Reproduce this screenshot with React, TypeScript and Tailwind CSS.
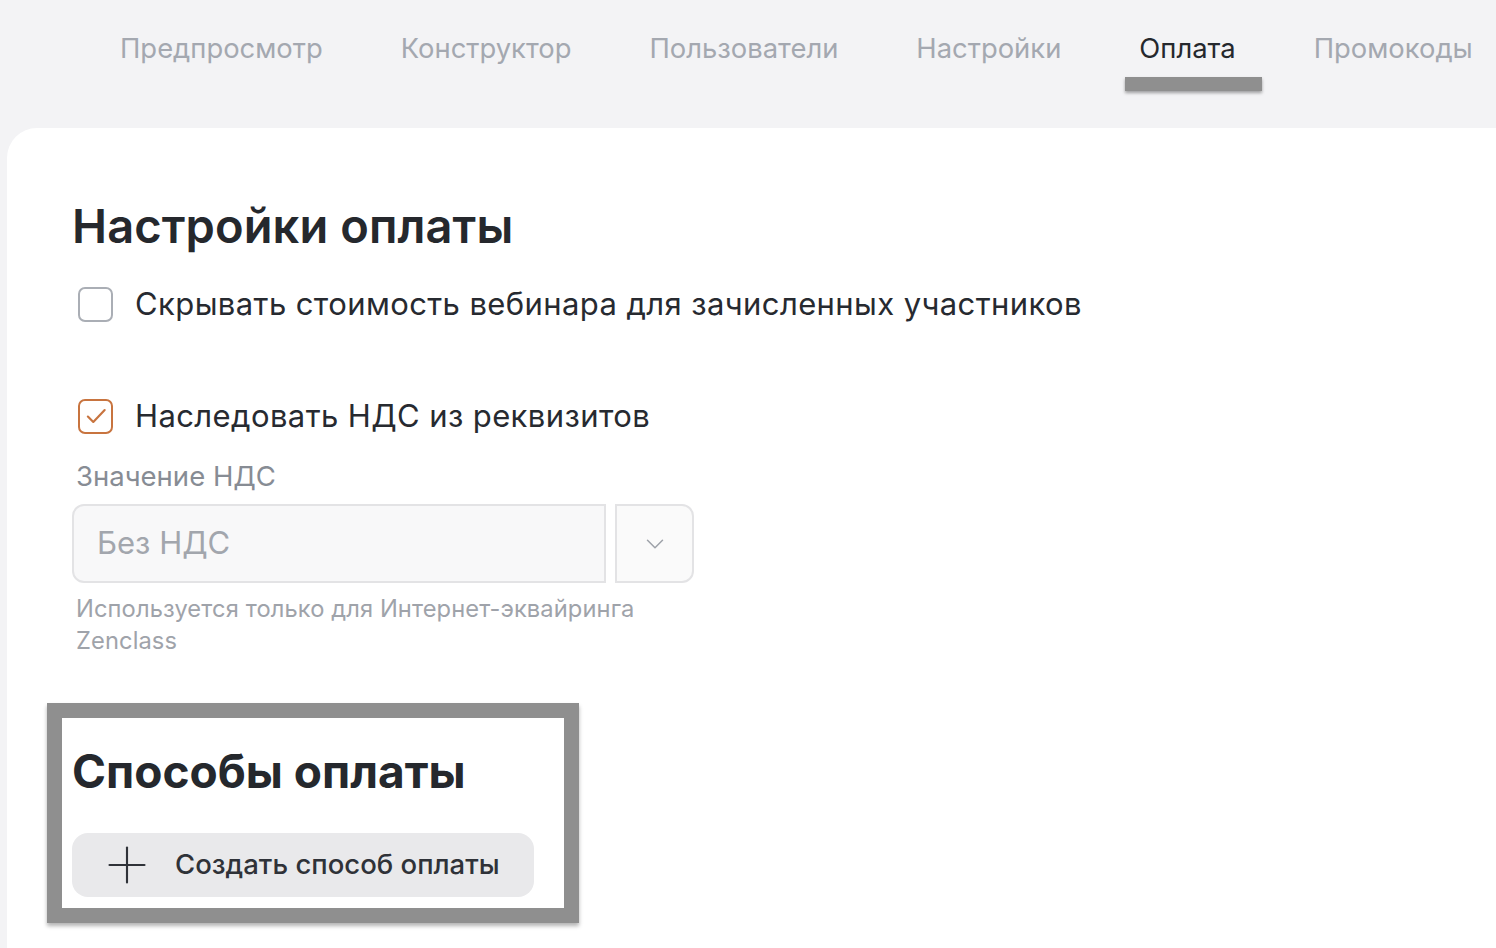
import React from "react";
import { ChevronDown, Plus } from "lucide-react";

const tabs = ["Предпросмотр", "Конструктор", "Пользователи", "Настройки", "Оплата", "Промокоды"];

function Tabs({ active }: { active: string }) {
  return (
    <nav className="flex h-[128px] items-start gap-[78px] pl-[120px] pt-[30px]">
      {tabs.map((t) => (
        <div key={t} className="relative">
          <span
            className={
              "text-[27.4px] leading-[36px] " +
              (t === active ? "text-[#25282d]" : "text-[#a4a8b0]")
            }
          >
            {t}
          </span>
          {t === active && (
            <div className="absolute left-[-14px] right-[-26px] top-[47px] h-[14px] bg-[#8f8f8f] shadow-[0_2px_3px_rgba(0,0,0,0.35)]" />
          )}
        </div>
      ))}
    </nav>
  );
}

function Checkbox({ checked, label }: { checked?: boolean; label: string }) {
  return (
    <label className="flex items-center gap-[22px] pl-[6px]">
      <span
        className={
          "grid h-[35px] w-[35px] place-items-center rounded-[7px] border-[2.5px] " +
          (checked ? "border-[#c8743f]" : "border-[#aaaeb5]")
        }
      >
        {checked && (
          <svg viewBox="0 0 24 24" className="h-[26px] w-[26px]" fill="none" stroke="#c8743f" strokeWidth="2" strokeLinecap="round" strokeLinejoin="round">
            <path d="M4.5 12.5l5 5L20 6.5" />
          </svg>
        )}
      </span>
      <span className="text-[31px] leading-[40px] tracking-[0.4px] text-[#272a30]">{label}</span>
    </label>
  );
}

export default function App() {
  return (
    <div className="min-h-[948px] w-[1496px] overflow-hidden bg-[#f3f3f5] font-['Inter',sans-serif]">
      <Tabs active="Оплата" />

      <main className="ml-[7px] min-h-[820px] rounded-tl-[30px] bg-white pl-[65px] pt-[72px]">
        <h2 className="text-[47px] font-semibold leading-[52px] tracking-[0.1px] text-[#25282d]">Настройки оплаты</h2>

        <div className="mt-[32px]">
          <Checkbox label="Скрывать стоимость вебинара для зачисленных участников" />
        </div>
        <div className="mt-[72px]">
          <Checkbox checked label="Наследовать НДС из реквизитов" />
        </div>

        <div className="mt-[22px] w-[622px]">
          <div className="pl-[4px] text-[27.5px] leading-[36px] text-[#878c94]">Значение НДС</div>
          <div className="mt-[10px] flex gap-[9px]">
            <div className="flex h-[79px] flex-1 items-center rounded-l-[12px] border-2 border-[#e3e3e5] bg-[#f8f8f9] px-[23px] text-[31px] text-[#a2a6ad]">
              Без НДС
            </div>
            <div className="grid h-[79px] w-[79px] place-items-center rounded-r-[12px] border-2 border-[#e3e3e5] bg-[#fafafa]">
              <ChevronDown className="h-[30px] w-[30px] text-[#9ea2a9]" strokeWidth={1.2} />
            </div>
          </div>
          <p className="mt-[10px] w-[600px] pl-[4px] text-[23.7px] leading-[32px] tracking-[0.1px] text-[#9fa3aa]">
            Используется только для Интернет-эквайринга Zenclass
          </p>
        </div>

        <section className="relative mt-[46px] w-[462px] pb-[26px] pt-[42px]">
          <div className="pointer-events-none absolute inset-y-0 left-[-25px] right-[-45px] border-[15px] border-[#8f8f8f] shadow-[0_3px_4px_rgba(0,0,0,0.3)]" />
          <h2 className="text-[46px] font-bold leading-[52px] text-[#25282d]">Способы оплаты</h2>
          <button className="mt-[36px] flex h-[64px] w-[462px] items-center gap-[18px] rounded-[16px] bg-[#e9e9eb] pl-[25px] text-[27.5px] font-medium text-[#2f3238]">
            <Plus className="h-[60px] w-[60px] text-[#2f3238]" strokeWidth={0.85} />
            Создать способ оплаты
          </button>
        </section>
      </main>
    </div>
  );
}
